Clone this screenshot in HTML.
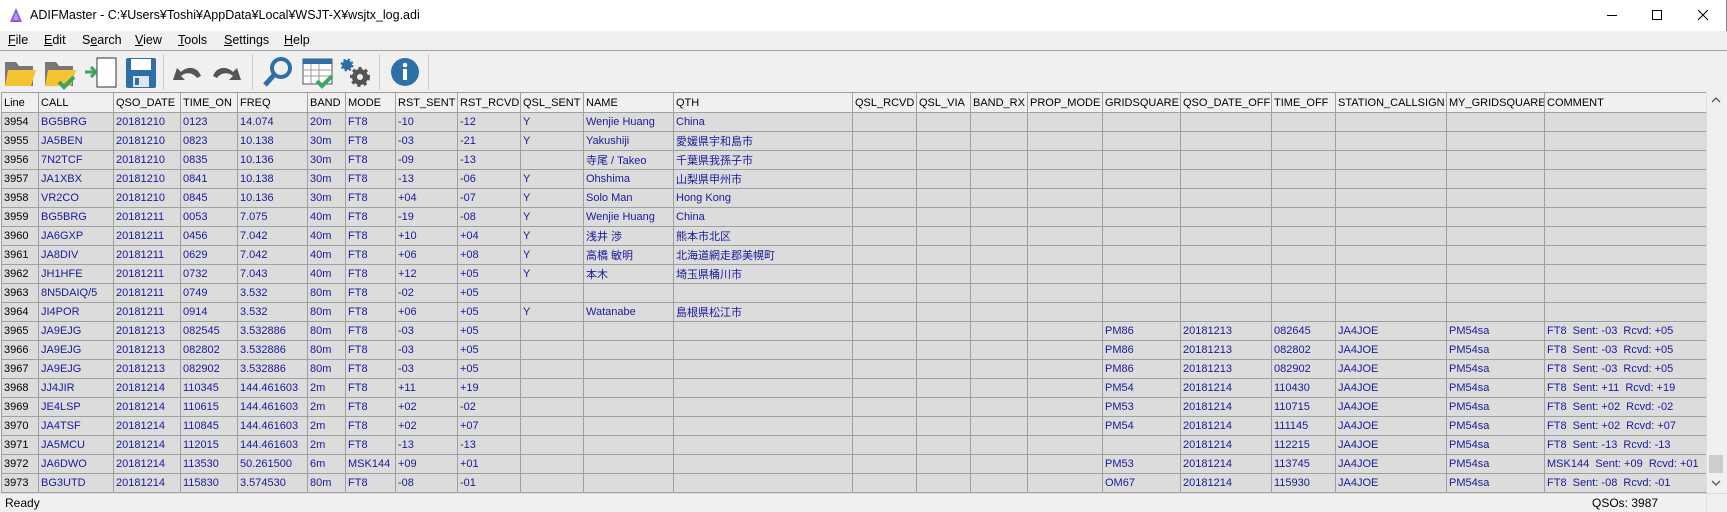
<!DOCTYPE html>
<html><head><meta charset="utf-8"><style>
*{margin:0;padding:0;box-sizing:border-box}
body{width:1727px;height:512px;overflow:hidden;background:#f0f0f0;font-family:"Liberation Sans","Noto Sans CJK JP",sans-serif;font-size:12px;color:#000;position:relative}
#title{position:absolute;left:0;top:0;width:1727px;height:31px;background:#fff;border-right:1px solid #888}
#title .t{position:absolute;left:30px;top:8px;font-size:12.5px}
#menu{position:absolute;left:0;top:31px;width:1727px;height:20px;border-bottom:1px solid #a0a0a0}
#menu span{position:absolute;top:2px;font-size:12.5px}
#tb{position:absolute;left:0;top:52px;height:40px;width:1727px}
.sep{position:absolute;top:2px;width:1px;height:36px;background:#c8c8c8}
#grid{position:absolute;left:1px;top:92px;width:1705px;height:401px;overflow:hidden;background:#fff}
table{border-collapse:collapse;table-layout:fixed;width:1705px}
td,th{border:1px solid #a0a0a0;height:19px;padding:0 2px;white-space:nowrap;overflow:hidden;font-weight:normal;text-align:left;font-size:11px}
th{background:#f0f0f0;height:20px}
td{background:#dcdcdc;color:#1a1a9a}
td:first-child{color:#000}
#sb{position:absolute;left:1706px;top:92px;width:19px;height:401px;background:#f0f0f0;border-left:1px solid #ddd}
#status{position:absolute;left:0;top:493px;width:1727px;height:19px;border-top:1px solid #d8d8d8}
</style></head><body>
<div id="title">
<svg style="position:absolute;left:9px;top:7px" width="14" height="16"><path d="M7 1L13 15H1Z" fill="#8a5be0"/><path d="M7 5L10 13H4Z" fill="#b89af0"/></svg>
<span class="t">ADIFMaster - C:¥Users¥Toshi¥AppData¥Local¥WSJT-X¥wsjtx_log.adi</span>
<svg style="position:absolute;left:1600px;top:0" width="127" height="31"><path d="M7 15.5H17" stroke="#000"/><rect x="52.5" y="10.5" width="9" height="9" fill="none" stroke="#000"/><path d="M98 10L108 20M108 10L98 20" stroke="#000"/></svg>
</div>
<div id="menu"><span style="left:8px"><u>F</u>ile</span><span style="left:44px"><u>E</u>dit</span><span style="left:82px">S<u>e</u>arch</span><span style="left:135px"><u>V</u>iew</span><span style="left:178px"><u>T</u>ools</span><span style="left:224px"><u>S</u>ettings</span><span style="left:284px"><u>H</u>elp</span></div>
<div id="tb">
<svg width="420" height="40">
<g transform="translate(5,6)"><path d="M0 4H11L14 8H28V28H0Z" fill="#777"/><path d="M3 12H31L26 28H0Z" fill="#f4c430"/></g>
<g transform="translate(45,6)"><path d="M0 4H11L14 8H28V28H0Z" fill="#777"/><path d="M3 12H31L26 28H0Z" fill="#f4c430"/><path d="M14 24L19 29L29 19" stroke="#3aa565" stroke-width="4" fill="none"/></g>
<g transform="translate(85,5)"><rect x="12" y="1" width="19" height="29" fill="#fff" stroke="#333"/><path d="M0 15H10M6 10L11 15L6 20" stroke="#3aa565" stroke-width="3" fill="none"/></g>
<g transform="translate(125,5)"><rect x="1" y="1" width="30" height="30" rx="2" fill="#2f6fa8"/><rect x="6" y="2" width="20" height="11" fill="#fff"/><rect x="8" y="19" width="16" height="11" fill="#dde6f0"/><rect x="10" y="21" width="4" height="7" fill="#2f6fa8"/></g>
<g transform="translate(173,8)"><path d="M4 8L0 20H12L8 16C12 12 20 12 24 18L28 16C24 6 14 6 8 12Z" fill="#555"/></g>
<g transform="translate(213,8)"><path d="M24 8L28 20H16L20 16C16 12 8 12 4 18L0 16C4 6 14 6 20 12Z" fill="#555"/></g>
<g transform="translate(262,5)"><circle cx="19" cy="11" r="9" fill="none" stroke="#2f6fa8" stroke-width="4"/><path d="M12 18L3 28" stroke="#2f6fa8" stroke-width="5"/></g>
<g transform="translate(302,5)"><rect x="1" y="2" width="29" height="25" fill="#fff" stroke="#555"/><rect x="1" y="2" width="29" height="5" fill="#2f6fa8"/><path d="M1 13H30M1 19H30M9 7V27M17 7V27" stroke="#999"/><path d="M15 24L20 29L30 19" stroke="#3aa565" stroke-width="4" fill="none"/></g>
<g transform="translate(340,5)"><circle cx="7" cy="8" r="5" fill="#2f6fa8" stroke="#2f6fa8" stroke-width="3" stroke-dasharray="2 2"/><circle cx="20" cy="20" r="8" fill="#555" stroke="#555" stroke-width="4" stroke-dasharray="3 3"/><circle cx="20" cy="20" r="3" fill="#f0f0f0"/></g>
<g transform="translate(390,5)"><circle cx="15" cy="15" r="14" fill="#2f6fa8"/><rect x="13" y="12" width="4" height="11" fill="#fff"/><circle cx="15" cy="8" r="2.3" fill="#fff"/></g>
</svg>
<div class="sep" style="left:163px"></div><div class="sep" style="left:252px"></div><div class="sep" style="left:379px"></div><div class="sep" style="left:428px"></div>
</div>
<div id="grid"><table>
<colgroup><col style="width:37px"><col style="width:75px"><col style="width:67px"><col style="width:57px"><col style="width:70px"><col style="width:38px"><col style="width:50px"><col style="width:62px"><col style="width:63px"><col style="width:63px"><col style="width:90px"><col style="width:179px"><col style="width:64px"><col style="width:54px"><col style="width:57px"><col style="width:75px"><col style="width:78px"><col style="width:91px"><col style="width:64px"><col style="width:111px"><col style="width:98px"><col style="width:162px"></colgroup>
<tr><th>Line</th><th>CALL</th><th>QSO_DATE</th><th>TIME_ON</th><th>FREQ</th><th>BAND</th><th>MODE</th><th>RST_SENT</th><th>RST_RCVD</th><th>QSL_SENT</th><th>NAME</th><th>QTH</th><th>QSL_RCVD</th><th>QSL_VIA</th><th>BAND_RX</th><th>PROP_MODE</th><th>GRIDSQUARE</th><th>QSO_DATE_OFF</th><th>TIME_OFF</th><th>STATION_CALLSIGN</th><th>MY_GRIDSQUARE</th><th>COMMENT</th></tr>
<tr><td>3954</td><td>BG5BRG</td><td>20181210</td><td>0123</td><td>14.074</td><td>20m</td><td>FT8</td><td>-10</td><td>-12</td><td>Y</td><td>Wenjie Huang</td><td>China</td><td></td><td></td><td></td><td></td><td></td><td></td><td></td><td></td><td></td><td></td></tr>
<tr><td>3955</td><td>JA5BEN</td><td>20181210</td><td>0823</td><td>10.138</td><td>30m</td><td>FT8</td><td>-03</td><td>-21</td><td>Y</td><td>Yakushiji</td><td>愛媛県宇和島市</td><td></td><td></td><td></td><td></td><td></td><td></td><td></td><td></td><td></td><td></td></tr>
<tr><td>3956</td><td>7N2TCF</td><td>20181210</td><td>0835</td><td>10.136</td><td>30m</td><td>FT8</td><td>-09</td><td>-13</td><td></td><td>寺尾 / Takeo</td><td>千葉県我孫子市</td><td></td><td></td><td></td><td></td><td></td><td></td><td></td><td></td><td></td><td></td></tr>
<tr><td>3957</td><td>JA1XBX</td><td>20181210</td><td>0841</td><td>10.138</td><td>30m</td><td>FT8</td><td>-13</td><td>-06</td><td>Y</td><td>Ohshima</td><td>山梨県甲州市</td><td></td><td></td><td></td><td></td><td></td><td></td><td></td><td></td><td></td><td></td></tr>
<tr><td>3958</td><td>VR2CO</td><td>20181210</td><td>0845</td><td>10.136</td><td>30m</td><td>FT8</td><td>+04</td><td>-07</td><td>Y</td><td>Solo Man</td><td>Hong Kong</td><td></td><td></td><td></td><td></td><td></td><td></td><td></td><td></td><td></td><td></td></tr>
<tr><td>3959</td><td>BG5BRG</td><td>20181211</td><td>0053</td><td>7.075</td><td>40m</td><td>FT8</td><td>-19</td><td>-08</td><td>Y</td><td>Wenjie Huang</td><td>China</td><td></td><td></td><td></td><td></td><td></td><td></td><td></td><td></td><td></td><td></td></tr>
<tr><td>3960</td><td>JA6GXP</td><td>20181211</td><td>0456</td><td>7.042</td><td>40m</td><td>FT8</td><td>+10</td><td>+04</td><td>Y</td><td>浅井 渉</td><td>熊本市北区</td><td></td><td></td><td></td><td></td><td></td><td></td><td></td><td></td><td></td><td></td></tr>
<tr><td>3961</td><td>JA8DIV</td><td>20181211</td><td>0629</td><td>7.042</td><td>40m</td><td>FT8</td><td>+06</td><td>+08</td><td>Y</td><td>高橋 敏明</td><td>北海道網走郡美幌町</td><td></td><td></td><td></td><td></td><td></td><td></td><td></td><td></td><td></td><td></td></tr>
<tr><td>3962</td><td>JH1HFE</td><td>20181211</td><td>0732</td><td>7.043</td><td>40m</td><td>FT8</td><td>+12</td><td>+05</td><td>Y</td><td>本木</td><td>埼玉県桶川市</td><td></td><td></td><td></td><td></td><td></td><td></td><td></td><td></td><td></td><td></td></tr>
<tr><td>3963</td><td>8N5DAIQ/5</td><td>20181211</td><td>0749</td><td>3.532</td><td>80m</td><td>FT8</td><td>-02</td><td>+05</td><td></td><td></td><td></td><td></td><td></td><td></td><td></td><td></td><td></td><td></td><td></td><td></td><td></td></tr>
<tr><td>3964</td><td>JI4POR</td><td>20181211</td><td>0914</td><td>3.532</td><td>80m</td><td>FT8</td><td>+06</td><td>+05</td><td>Y</td><td>Watanabe</td><td>島根県松江市</td><td></td><td></td><td></td><td></td><td></td><td></td><td></td><td></td><td></td><td></td></tr>
<tr><td>3965</td><td>JA9EJG</td><td>20181213</td><td>082545</td><td>3.532886</td><td>80m</td><td>FT8</td><td>-03</td><td>+05</td><td></td><td></td><td></td><td></td><td></td><td></td><td></td><td>PM86</td><td>20181213</td><td>082645</td><td>JA4JOE</td><td>PM54sa</td><td>FT8&nbsp; Sent: -03&nbsp; Rcvd: +05</td></tr>
<tr><td>3966</td><td>JA9EJG</td><td>20181213</td><td>082802</td><td>3.532886</td><td>80m</td><td>FT8</td><td>-03</td><td>+05</td><td></td><td></td><td></td><td></td><td></td><td></td><td></td><td>PM86</td><td>20181213</td><td>082802</td><td>JA4JOE</td><td>PM54sa</td><td>FT8&nbsp; Sent: -03&nbsp; Rcvd: +05</td></tr>
<tr><td>3967</td><td>JA9EJG</td><td>20181213</td><td>082902</td><td>3.532886</td><td>80m</td><td>FT8</td><td>-03</td><td>+05</td><td></td><td></td><td></td><td></td><td></td><td></td><td></td><td>PM86</td><td>20181213</td><td>082902</td><td>JA4JOE</td><td>PM54sa</td><td>FT8&nbsp; Sent: -03&nbsp; Rcvd: +05</td></tr>
<tr><td>3968</td><td>JJ4JIR</td><td>20181214</td><td>110345</td><td>144.461603</td><td>2m</td><td>FT8</td><td>+11</td><td>+19</td><td></td><td></td><td></td><td></td><td></td><td></td><td></td><td>PM54</td><td>20181214</td><td>110430</td><td>JA4JOE</td><td>PM54sa</td><td>FT8&nbsp; Sent: +11&nbsp; Rcvd: +19</td></tr>
<tr><td>3969</td><td>JE4LSP</td><td>20181214</td><td>110615</td><td>144.461603</td><td>2m</td><td>FT8</td><td>+02</td><td>-02</td><td></td><td></td><td></td><td></td><td></td><td></td><td></td><td>PM53</td><td>20181214</td><td>110715</td><td>JA4JOE</td><td>PM54sa</td><td>FT8&nbsp; Sent: +02&nbsp; Rcvd: -02</td></tr>
<tr><td>3970</td><td>JA4TSF</td><td>20181214</td><td>110845</td><td>144.461603</td><td>2m</td><td>FT8</td><td>+02</td><td>+07</td><td></td><td></td><td></td><td></td><td></td><td></td><td></td><td>PM54</td><td>20181214</td><td>111145</td><td>JA4JOE</td><td>PM54sa</td><td>FT8&nbsp; Sent: +02&nbsp; Rcvd: +07</td></tr>
<tr><td>3971</td><td>JA5MCU</td><td>20181214</td><td>112015</td><td>144.461603</td><td>2m</td><td>FT8</td><td>-13</td><td>-13</td><td></td><td></td><td></td><td></td><td></td><td></td><td></td><td></td><td>20181214</td><td>112215</td><td>JA4JOE</td><td>PM54sa</td><td>FT8&nbsp; Sent: -13&nbsp; Rcvd: -13</td></tr>
<tr><td>3972</td><td>JA6DWO</td><td>20181214</td><td>113530</td><td>50.261500</td><td>6m</td><td>MSK144</td><td>+09</td><td>+01</td><td></td><td></td><td></td><td></td><td></td><td></td><td></td><td>PM53</td><td>20181214</td><td>113745</td><td>JA4JOE</td><td>PM54sa</td><td>MSK144&nbsp; Sent: +09&nbsp; Rcvd: +01</td></tr>
<tr><td>3973</td><td>BG3UTD</td><td>20181214</td><td>115830</td><td>3.574530</td><td>80m</td><td>FT8</td><td>-08</td><td>-01</td><td></td><td></td><td></td><td></td><td></td><td></td><td></td><td>OM67</td><td>20181214</td><td>115930</td><td>JA4JOE</td><td>PM54sa</td><td>FT8&nbsp; Sent: -08&nbsp; Rcvd: -01</td></tr>
</table></div>
<div id="sb"><svg width="18" height="401"><path d="M5 10L9 6L13 10" stroke="#555" fill="none" stroke-width="1.3"/><rect x="2" y="363" width="14" height="18" fill="#cdcdcd"/><path d="M5 389L9 393L13 389" stroke="#555" fill="none" stroke-width="1.3"/></svg></div>
<div id="status"><span style="position:absolute;left:5px;top:2px">Ready</span><span style="position:absolute;left:1592px;top:2px">QSOs: 3987</span><div style="position:absolute;left:1706px;top:1px;width:1px;height:17px;background:#ddd"></div></div>
</body></html>
